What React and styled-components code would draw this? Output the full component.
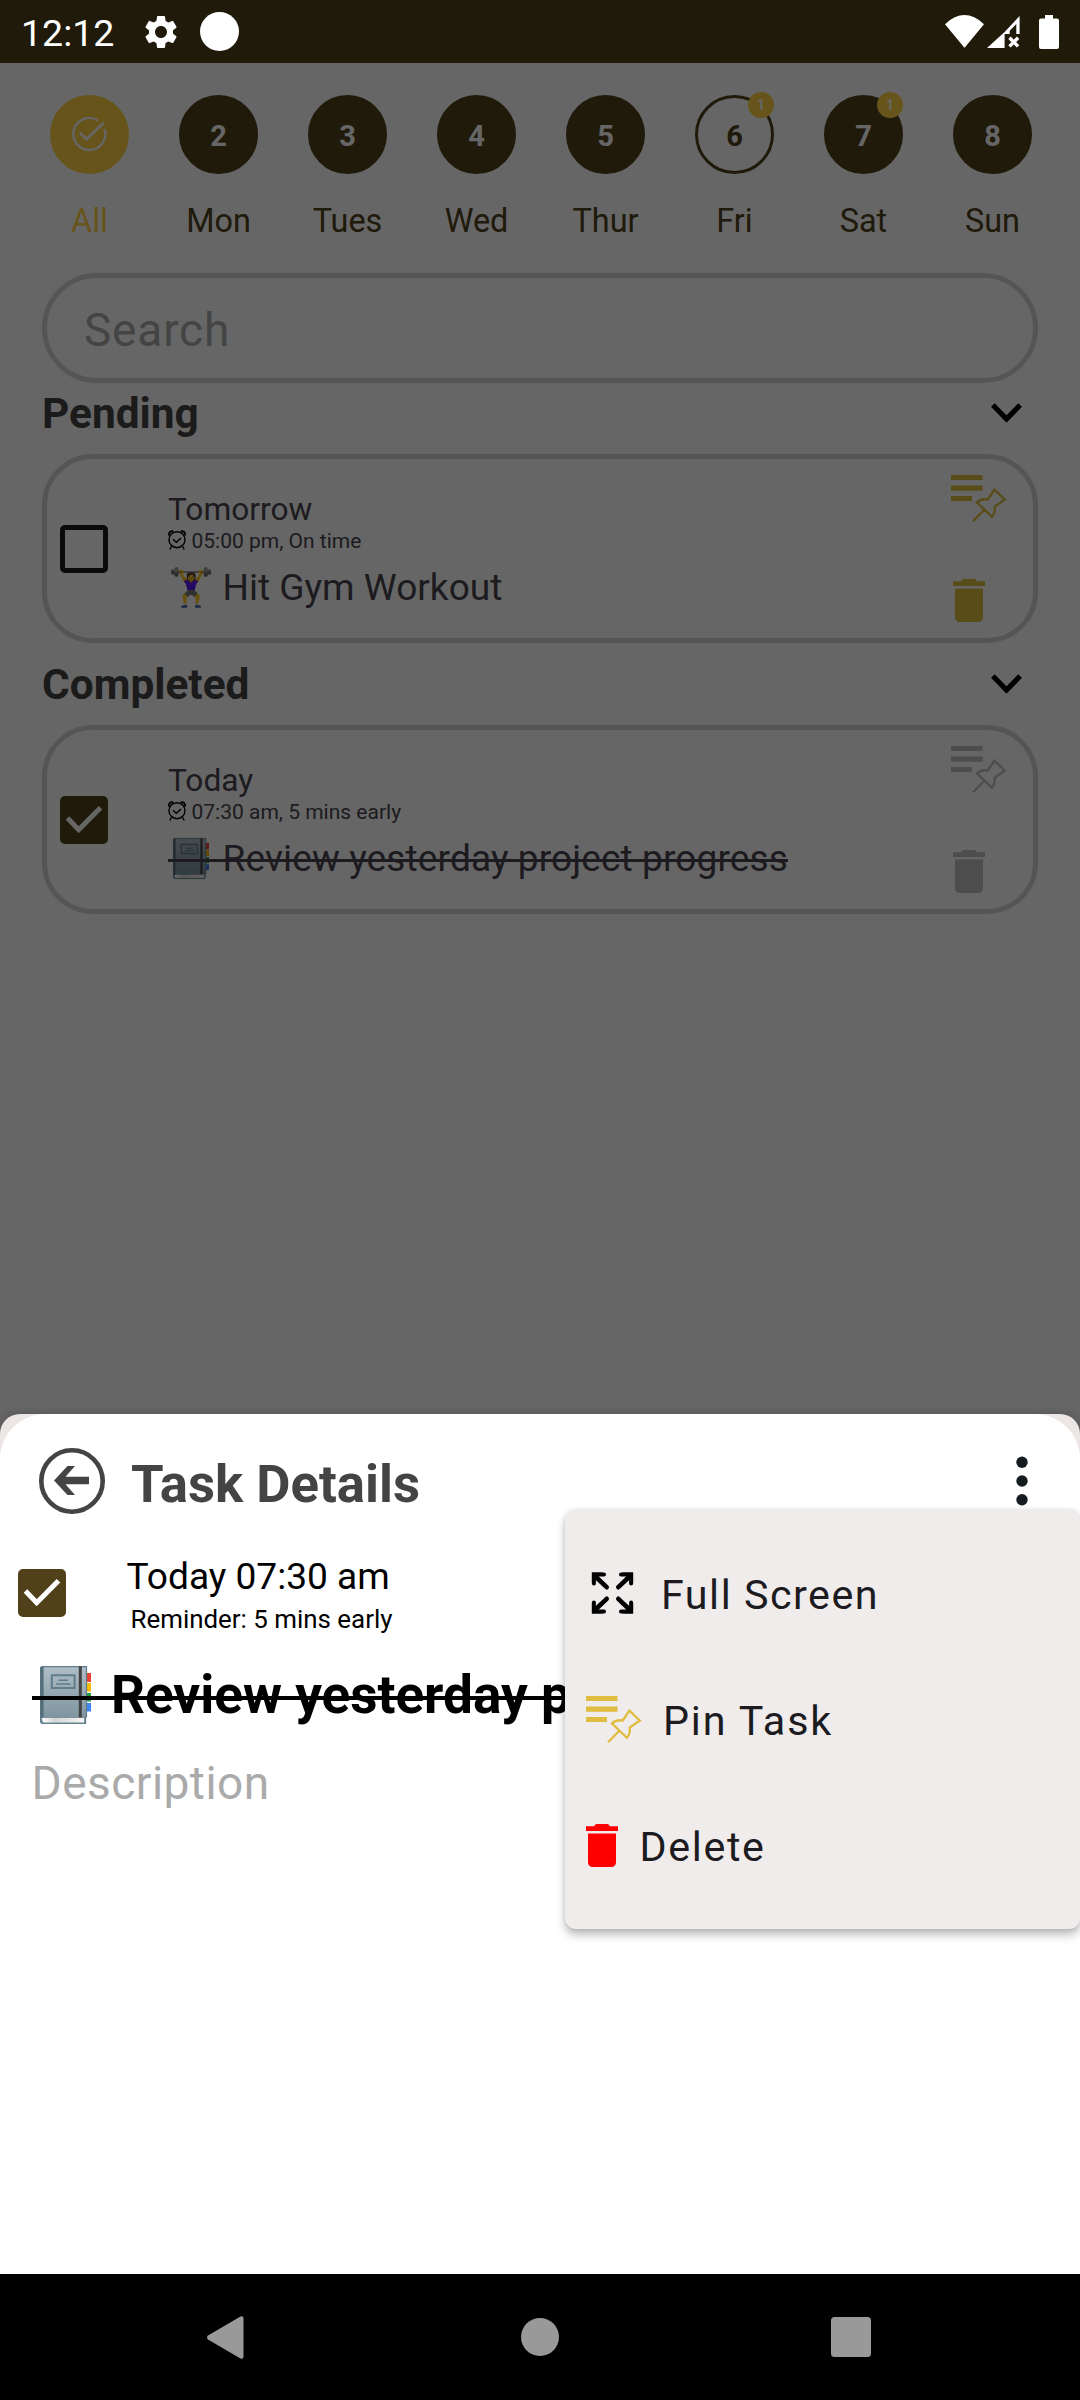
import React from "react";
import styled, { createGlobalStyle } from "styled-components";
import { MdSettings } from "react-icons/md";

const GlobalStyle = createGlobalStyle`
  * { box-sizing: border-box; }
  body {
    margin: 0;
    background: #fff;
    font-family: Roboto, "Noto Color Emoji", "Liberation Sans", sans-serif;
  }
  svg { display: block; flex: none; overflow: visible; }
`;

const Screen = styled.div`
  position: relative;
  display: flex;
  flex-direction: column;
  width: 1080px;
  height: 2400px;
  overflow: hidden;
  background: #fff;
`;

const StatusBar = styled.header`
  position: relative;
  z-index: 2;
  display: flex;
  align-items: center;
  height: 63px;
  padding: 0 21px;
  background: #201a0b;
  color: #fff;
`;
const Clock = styled.span`
  width: 120px;
  padding-top: 3px;
  font-size: 37.5px;
  line-height: 60px;
`;
const Dot = styled.span`
  width: 39px;
  height: 39px;
  margin-left: 18.5px;
  border-radius: 50%;
  background: #fff;
`;
const StatusIcons = styled.div`
  display: flex;
  align-items: center;
  margin-left: auto;
`;

const Content = styled.main`
  flex: 1;
  display: flex;
  flex-direction: column;
`;
const Scrim = styled.div`
  position: absolute;
  inset: 63px 0 0;
  background: rgba(0, 0, 0, 0.6);
`;

const Days = styled.div`
  display: grid;
  grid-template-columns: repeat(8, 129px);
  padding: 32px 0 0 25px;
`;
const Day = styled.div`
  display: flex;
  flex-direction: column;
  align-items: center;
`;
const DayCircle = styled.div`
  position: relative;
  display: flex;
  align-items: center;
  justify-content: center;
  width: 79px;
  height: 79px;
  padding-top: ${(p) => (p.$kind === "all" ? 0 : 3)}px;
  border-radius: 50%;
  border: 3px solid ${(p) => (p.$kind === "all" ? "#ffd345" : "#50411b")};
  background: ${(p) => ({ all: "#ffd345", open: "transparent" })[p.$kind] || "#50411b"};
  color: ${(p) => (p.$kind === "open" ? "#50411b" : "#fff")};
  font-size: 29px;
  font-weight: 700;
`;
const Badge = styled.span`
  position: absolute;
  top: -6px;
  right: -3px;
  width: 26px;
  height: 26px;
  border-radius: 50%;
  background: #ffd345;
  color: #fff;
  font-size: 14px;
  line-height: 27px;
  text-align: center;
`;
const DayName = styled.span`
  margin-top: 27px;
  font-size: 32.4px;
  line-height: 40px;
  color: ${(p) => (p.$active ? "#ffd345" : "#50411b")};
`;

const Search = styled.div`
  height: 110px;
  margin: 32px 42px 0;
  padding: 3px 0 0 37px;
  border: 5px solid #d5d5d5;
  border-radius: 55px;
  color: #aaa;
  font-size: 46px;
  letter-spacing: 0.8px;
  line-height: 98px;
`;

const SectionHead = styled.div`
  display: flex;
  align-items: flex-start;
  justify-content: space-between;
  height: 71px;
  margin-top: ${(p) => p.$gap || 0}px;
  padding: 0 58px 0 42px;
  svg { margin-top: 20px; }
`;
const SectionTitle = styled.h2`
  margin: 0;
  padding-top: 1px;
  font-size: 42.4px;
  font-weight: 700;
  line-height: 60px;
  color: #444;
`;

const Card = styled.article`
  display: flex;
  align-items: flex-start;
  height: 189px;
  margin: 0 42px;
  padding: 0 27px 0 13px;
  border: 5px solid #d5d5d5;
  border-radius: 51px;
`;
const CheckCell = styled.div`
  align-self: center;
`;
const Box = styled.div`
  width: 48px;
  height: 48px;
  border-radius: 5px;
  border: 5px solid ${(p) => (p.$checked ? "#50411a" : "#1a1a1a")};
  background: ${(p) => (p.$checked ? "#50411a" : "transparent")};
`;
const TaskText = styled.div`
  margin-left: 60px;
  padding-top: 35px;
  color: #49454f;
`;
const TaskDay = styled.div`
  height: 31px;
  font-size: 31.7px;
  line-height: 32px;
`;
const TaskTime = styled.div`
  display: flex;
  align-items: center;
  gap: 5.5px;
  font-size: 21px;
  line-height: 32px;
`;
const TaskTitle = styled.div`
  position: relative;
  display: flex;
  align-items: flex-start;
  font-size: 37.1px;
  letter-spacing: ${(p) => (p.$done ? 0.1 : 0)}px;
  line-height: 61px;
  white-space: nowrap;
  &::after {
    content: "";
    display: ${(p) => (p.$done ? "block" : "none")};
    position: absolute;
    top: 31px;
    left: 0;
    right: 0;
    height: 3px;
    background: currentColor;
  }
`;
const Emoji = styled.span`
  flex: none;
  width: 54.5px;
`;
const SmallBook = styled.span`
  flex: none;
  width: 54.5px;
  padding: 10px 0 0 5px;
  svg { width: 36px; height: 41px; }
`;
const Actions = styled.div`
  display: flex;
  flex-direction: column;
  gap: 57px;
  margin-left: auto;
  padding-top: 16px;
  svg + svg { margin-left: 2px; }
`;

const SheetBack = styled.section`
  position: absolute;
  top: 1414px;
  left: 0;
  right: 0;
  height: 860px;
  border-radius: 20px 20px 0 0;
  background: #ece6e4;
  box-shadow: 0 0 10px rgba(0, 0, 0, 0.2);
`;
const Sheet = styled.div`
  height: 100%;
  padding-top: 34px;
  border-radius: 45px 45px 0 0;
  background: #fff;
`;
const SheetHead = styled.div`
  display: flex;
  align-items: center;
  height: 66px;
  padding: 0 52.5px 0 39px;
`;
const SheetTitle = styled.h1`
  margin: 0 auto 0 26px;
  padding-top: 5px;
  font-size: 52.7px;
  line-height: 62px;
  color: #444;
`;
const Reminder = styled.div`
  display: flex;
  align-items: flex-start;
  height: 86px;
  margin-top: 40px;
  padding-left: 18px;
  color: #000;
  ${Box} { margin-top: 15px; }
`;
const When = styled.div`
  margin-left: 60.5px;
  font-size: 37.1px;
  line-height: 45px;
`;
const Early = styled.div`
  padding-left: 4px;
  font-size: 25.9px;
  line-height: 40px;
`;
const DetailTitle = styled.div`
  position: relative;
  display: flex;
  align-items: flex-start;
  width: 566px;
  margin-top: 20px;
  padding-left: 32px;
  overflow: hidden;
  font-size: 53.1px;
  font-weight: 700;
  line-height: 70px;
  white-space: nowrap;
  &::after {
    content: "";
    position: absolute;
    top: 36px;
    left: 32px;
    right: 0;
    height: 3.5px;
    background: #000;
  }
`;
const LargeBook = styled.span`
  flex: none;
  width: 79px;
  padding: 6px 0 0 8px;
  svg { width: 51px; height: 58px; }
`;
const Description = styled.div`
  margin: 18px 0 0 31.5px;
  font-size: 46px;
  letter-spacing: 0.48px;
  line-height: 70px;
  color: #aaa;
`;

const Menu = styled.div`
  position: absolute;
  top: 95px;
  right: 0;
  width: 515px;
  height: 420px;
  padding: 21px 0 21px 21px;
  border-radius: 11px;
  background: #f0eceb;
  box-shadow: 0 6px 10px rgba(0, 0, 0, 0.25), 0 1px 4px rgba(0, 0, 0, 0.1);
`;
const MenuItem = styled.div`
  display: flex;
  align-items: center;
  gap: ${(p) => p.$gap}px;
  height: 126px;
  padding-left: ${(p) => p.$indent || 0}px;
  color: #1c1b1f;
  font-size: 41.25px;
  letter-spacing: ${(p) => p.$tracking || 1.65}px;
  span { padding-top: 3px; }
`;

const NavBar = styled.nav`
  position: relative;
  display: flex;
  align-items: center;
  justify-content: space-between;
  height: 126px;
  padding: 0 209px 0 207px;
  background: #000;
`;

const Wifi = () => (
  <svg width="39" height="34" viewBox="0 0 39 34" fill="#fff"><path d="M0 9.200Q19.500 -9 39 9.200L20.200 32Q19.500 33 18.800 32Z" /></svg>
);
const SignalSvg = styled.svg`
  margin-left: 3px;
`;
const Signal = () => (
  <SignalSvg width="33" height="34" viewBox="0 0 33 34" fill="#fff">
    <path d="M0 33 17.600 17V33ZM17.600 17 32.600 1V19H29.300V9L22.700 15.700V19H17.600Z" />
    <path d="m22.500 22.800 8.600 8.600m0-8.600-8.600 8.600" stroke="#fff" strokeWidth="3.400" />
  </SignalSvg>
);
const BatterySvg = styled.svg`
  margin-left: 19px;
`;
const Battery = () => (
  <BatterySvg width="20" height="34" viewBox="0 0 20 34" fill="#fff">
    <path d="M6 0h8v3.500h4a2 2 0 0 1 2 2V32a2 2 0 0 1-2 2H2a2 2 0 0 1-2-2V5.500a2 2 0 0 1 2-2h4Z" />
  </BatterySvg>
);
const AllIcon = () => (
  <svg width="36" height="36" viewBox="0.600 1.300 36 36" fill="none" stroke="#fff" strokeWidth="2.400">
    <path d="M26.400 4.700A16 16 0 1 0 33.200 13.500" />
    <path d="M8.300 17.100 15.300 23.600 32.200 7" strokeWidth="2.800" />
  </svg>
);
const Chevron = () => (
  <svg width="31" height="20" viewBox="0 0 31 20" fill="none" stroke="#000" strokeWidth="5.200"><path d="m1.900 2 13.600 14L29.100 2" /></svg>
);
const AlarmSvg = styled.svg`
  margin-top: -3px;
`;
const Alarm = () => (
  <AlarmSvg width="18" height="20" viewBox="0 0 18 20" fill="none" stroke="#000" strokeWidth="1.400">
    <circle cx="9" cy="9.700" r="8" />
    <path d="m5 9.300 3.300 3L13 8M3.500 16.300 1.800 19.500M14.500 16.300l1.700 3.200" />
    <path d="M1 5.500C.2 2.500 2.500.6 5.500 1.500M17 5.500C17.800 2.500 15.500.6 12.500 1.500" strokeWidth="1.800" />
  </AlarmSvg>
);
const Pin = ({ color }) => (
  <svg width="55" height="47" viewBox="0 0 55 47" fill="none" stroke={color} strokeWidth="2.300">
    <path d="M0 0h31.500v5H0zM0 10.500h31.500v5.300H0zM0 21h21v5H0z" fill={color} stroke="none" />
    <path d="M22 46.300 33.400 34.700M25.800 27.300Q30.500 23.300 36.800 24.500L43.400 14.600 53.800 24.500 43.700 31.600Q44.600 37.500 41 41.800Z" />
  </svg>
);
const Trash = ({ color }) => (
  <svg width="32" height="43" viewBox="0 0 32 43" fill={color}>
    <path d="M0 2.200h8L10 0h12l2 2.200h8V7H0zM2 9.500h28V38.500a4.500 4.500 0 0 1-4.500 4.500h-19A4.500 4.500 0 0 1 2 38.500z" />
  </svg>
);
const Book = ({ id }) => (
  <svg viewBox="0 0 51 58" preserveAspectRatio="none">
    <defs>
      <linearGradient id={`${id}-cover`} x2="0" y2="1"><stop stopColor="#b0bec5" /><stop offset="1" stopColor="#78909c" /></linearGradient>
      <linearGradient id={`${id}-pages`}><stop stopColor="#fff" /><stop offset="0.300" stopColor="#d5d5d5" /><stop offset="1" stopColor="#f5f5f5" /></linearGradient>
    </defs>
    <path d="M45 7h6v9h-6z" fill="#ea4335" />
    <path d="M45 17h6v8.500h-6z" fill="#fbbc04" />
    <path d="M45 27h6v8.500h-6z" fill="#1e9e42" />
    <path d="M45 37h6v8.500h-6z" fill="#4285f4" />
    <path d="M2.500.6H46.500V51H45.500V57.400H2.500Q.6 57.400.6 55V2.500Q.6.6 2.500.6Z" fill={`url(#${id}-cover)`} stroke="#607d8b" strokeWidth="1.200" />
    <path d="M.4 2.500Q.4.400 3.600.4V51.500H.4Z" fill="#546e7a" />
    <path d="M2.200 52H44V56.600H3.500Q1.500 54.500 2.200 52Z" fill={`url(#${id}-pages)`} />
    <path d="M38.800.4h3v51h-3z" fill="#424242" />
    <g fill="none" stroke="#607d8b"><path d="M11.800 9.300H34.600V22H11.800Z" strokeWidth="2" /><path d="M18.500 14.300H28M16 18H30.500" strokeWidth="1.600" /></g>
  </svg>
);
const BackArrow = () => (
  <svg width="66" height="66" viewBox="0 0 66 66" fill="#444">
    <circle cx="33" cy="33" r="30.700" fill="none" stroke="#444" strokeWidth="4.600" />
    <path d="M15 32.500 28.500 18H36L26.500 28.800H50V36.300H26.500L36 47H28.500Z" />
  </svg>
);
const More = () => (
  <svg width="12" height="50" viewBox="0 0 12 50" fill="#151c20">
    <circle cx="6" cy="6.300" r="5.700" /><circle cx="6" cy="25" r="5.700" /><circle cx="6" cy="43.800" r="5.700" />
  </svg>
);
const Expand = () => (
  <svg width="41" height="41" viewBox="-20.500 -20 41 41">
    {[[1, 1], [-1, 1], [1, -1], [-1, -1]].map(([x, y]) => (
      <g key={`${x}${y}`} transform={`scale(${x} ${y})`} stroke="#000" strokeLinecap="round">
        <path d="M5.800 5.800 16 15.500" strokeWidth="4.600" />
        <path d="M8.500 18.400H18.600V9.500" strokeWidth="4" fill="none" />
        <path d="M20.600 20.400V10L10 20.400Z" stroke="none" />
      </g>
    ))}
  </svg>
);
const Tick = () => (
  <svg width="38" height="38" viewBox="5 5 38 38" fill="none" stroke="#fff" strokeWidth="5"><path d="M7.500 22 18.700 33.700 40.500 11.700" /></svg>
);

const Checkbox = ({ checked }) => <Box $checked={checked}>{checked && <Tick />}</Box>;

const days = [
  { name: "All", kind: "all" },
  { name: "Mon", n: 2 },
  { name: "Tues", n: 3 },
  { name: "Wed", n: 4 },
  { name: "Thur", n: 5 },
  { name: "Fri", n: 6, kind: "open", badge: 1 },
  { name: "Sat", n: 7, badge: 1 },
  { name: "Sun", n: 8 },
];

const Task = ({ day, time, icon, title, done }) => {
  const color = done ? "#c0c0c0" : "#ddbe3e";
  return (
    <Card>
      <CheckCell><Checkbox checked={done} /></CheckCell>
      <TaskText>
        <TaskDay>{day}</TaskDay>
        <TaskTime><Alarm />{time}</TaskTime>
        <TaskTitle $done={done}>{icon}{title}</TaskTitle>
      </TaskText>
      <Actions><Pin color={color} /><Trash color={color} /></Actions>
    </Card>
  );
};

export default function App() {
  return (
    <Screen>
      <GlobalStyle />
      <StatusBar>
        <Clock>12:12</Clock>
        <MdSettings size={40} />
        <Dot />
        <StatusIcons><Wifi /><Signal /><Battery /></StatusIcons>
      </StatusBar>
      <Content>
        <Days>
          {days.map((d) => (
            <Day key={d.name}>
              <DayCircle $kind={d.kind}>
                {d.n || <AllIcon />}
                {d.badge && <Badge>{d.badge}</Badge>}
              </DayCircle>
              <DayName $active={d.kind === "all"}>{d.name}</DayName>
            </Day>
          ))}
        </Days>
        <Search>Search</Search>
        <SectionHead><SectionTitle>Pending</SectionTitle><Chevron /></SectionHead>
        <Task day="Tomorrow" time="05:00 pm, On time" icon={<Emoji>🏋️‍♀️</Emoji>} title="Hit Gym Workout" />
        <SectionHead $gap={11}><SectionTitle>Completed</SectionTitle><Chevron /></SectionHead>
        <Task
          day="Today"
          time="07:30 am, 5 mins early"
          icon={<SmallBook><Book id="small" /></SmallBook>}
          title="Review yesterday project progress"
          done
        />
      </Content>
      <Scrim />
      <SheetBack>
        <Sheet>
          <SheetHead><BackArrow /><SheetTitle>Task Details</SheetTitle><More /></SheetHead>
          <Reminder>
            <Checkbox checked />
            <When>
              Today 07:30 am
              <Early>Reminder: 5 mins early</Early>
            </When>
          </Reminder>
          <DetailTitle><LargeBook><Book id="large" /></LargeBook>Review yesterday project progress</DetailTitle>
          <Description>Description</Description>
        </Sheet>
        <Menu>
          <MenuItem $indent={6} $gap={28} $tracking={1.5}><Expand /><span>Full Screen</span></MenuItem>
          <MenuItem $gap={22} $tracking={1.85}><Pin color="#e0bc40" /><span>Pin Task</span></MenuItem>
          <MenuItem $gap={21.5}><Trash color="#ff0000" /><span>Delete</span></MenuItem>
        </Menu>
      </SheetBack>
      <NavBar>
        <svg width="42" height="43" viewBox="0 0 42 43" fill="#999"><path d="M1 19.500 33 .8Q36.500-.8 36.500 2.500V40.500Q36.500 43.800 33 42.200L1 23.500Q-1 21.500 1 19.500Z" /></svg>
        <svg width="38" height="38" viewBox="0 0 38 38" fill="#999"><circle cx="19" cy="19" r="19" /></svg>
        <svg width="40" height="40" viewBox="0 0 40 40" fill="#999"><rect width="40" height="40" rx="3.500" /></svg>
      </NavBar>
    </Screen>
  );
}
